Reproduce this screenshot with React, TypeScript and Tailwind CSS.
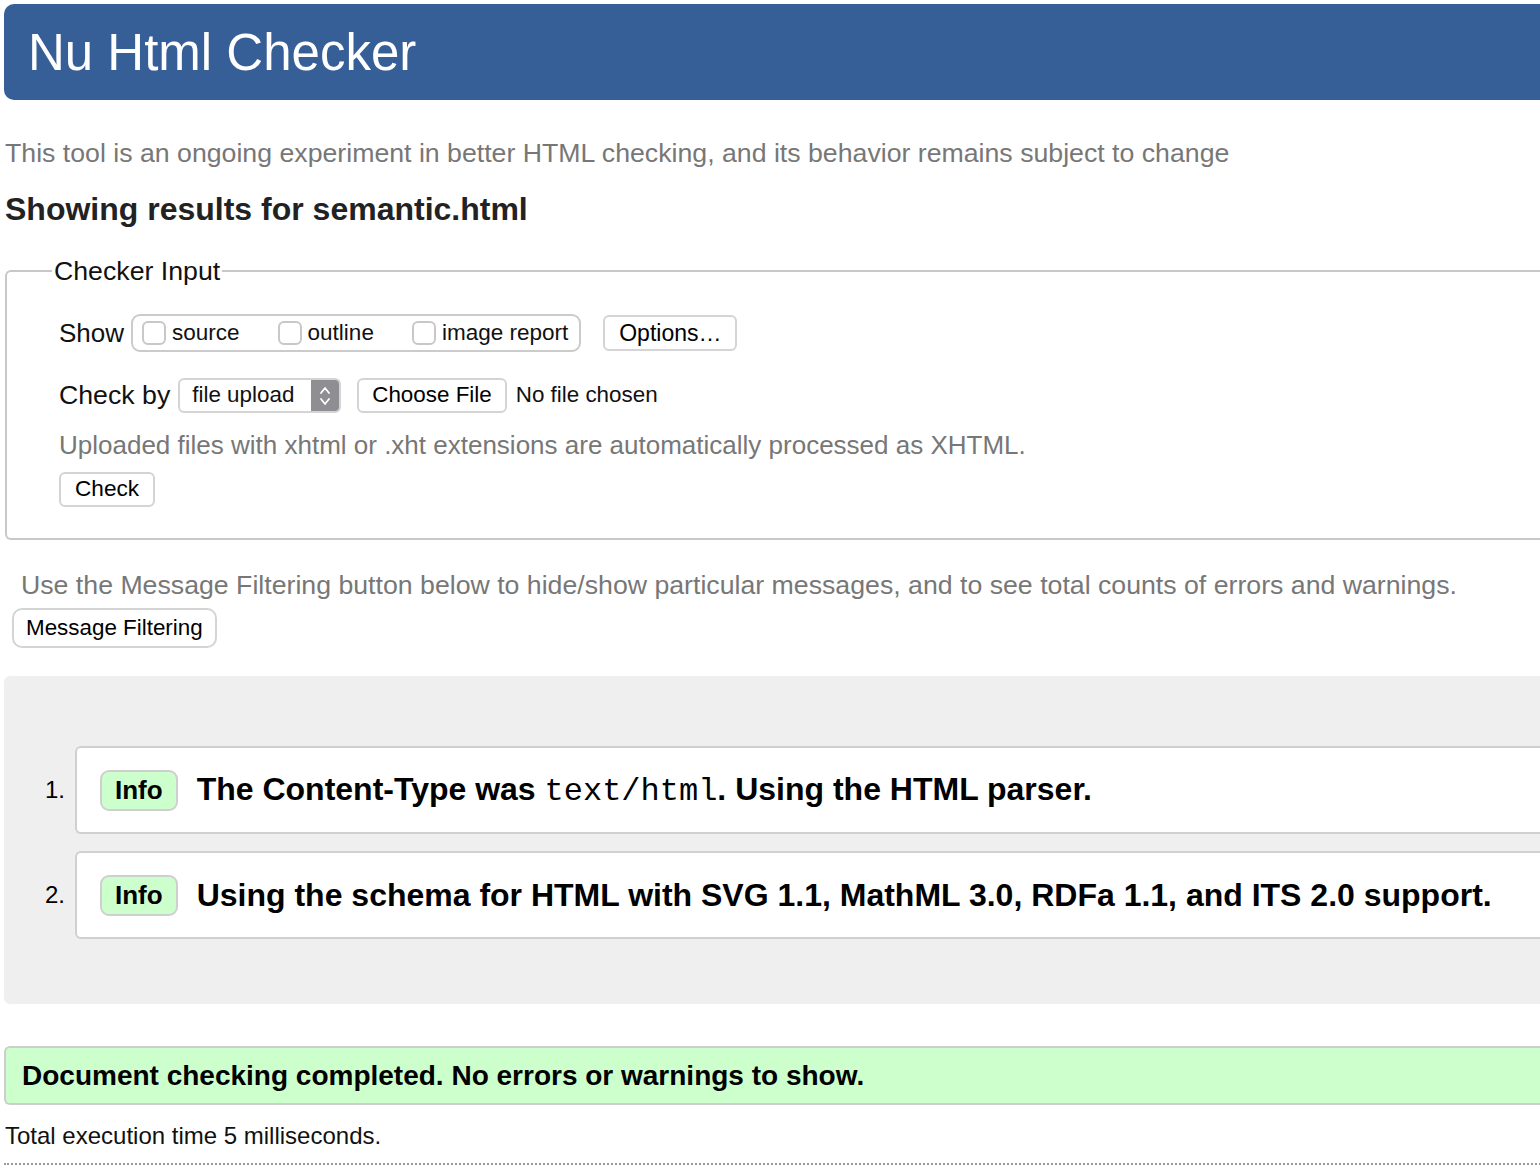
import React from "react";

const sans = "font-['Liberation_Sans',Arial,sans-serif]";

function Checkbox({ label }: { label: string }) {
  return (
    <label className="flex items-center gap-[6px]">
      <span className="w-[24px] h-[24px] rounded-[6px] border-2 border-[#c8c8c8] bg-white" />
      <span>{label}</span>
    </label>
  );
}

function Btn({ children, className = "" }: { children: React.ReactNode; className?: string }) {
  return (
    <button
      className={`bg-white border-2 border-[#d4d4d4] rounded-[6px] text-black leading-none ${className}`}
    >
      {children}
    </button>
  );
}

function Message({ n, children }: { n: number; children: React.ReactNode }) {
  return (
    <li className="flex items-center">
      <span className="w-[71px] pr-[10px] text-right text-[24px] text-black">{n}.</span>
      <div className="flex-1 h-[88px] bg-white border-2 border-r-0 border-[#d0d0d0] rounded-l-[6px] flex items-center pl-[23px] gap-[19px]">
        <span className="h-[41px] px-[13px] flex items-center bg-[#ccffcc] border-2 border-[#cfcfcf] rounded-[9px] font-bold text-[26px]">
          Info
        </span>
        <p className="font-bold text-[32px] text-black whitespace-nowrap">{children}</p>
      </div>
    </li>
  );
}

export default function App() {
  return (
    <div className={`w-full overflow-hidden bg-white ${sans}`}>
      <div className="w-[1600px] pl-[4px] pt-[4px] pb-[8px]">
        <header className="h-[96px] bg-[#365e97] rounded-l-[10px] flex items-center pl-[24px]">
          <h1 className="text-white text-[51px] leading-none">Nu Html Checker</h1>
        </header>

        <p className="mt-[38px] ml-[1px] text-[26.7px] leading-[30px] text-[#777]">
          This tool is an ongoing experiment in better HTML checking, and its behavior remains subject to change
        </p>
        <h2 className="mt-[23px] ml-[1px] text-[32px] leading-[36px] font-bold text-[#222]">
          Showing results for semantic.html
        </h2>

        <fieldset className="mt-[29px] ml-[1px] border-2 border-r-0 border-[#c8c8c8] rounded-l-[6px] pb-[31px]">
          <legend className="ml-[45px] px-[2px] text-[26.7px] leading-[30px] text-[#111]">Checker Input</legend>

          <div className="pl-[52px] pt-[28px]">
            <div className="h-[38px] flex items-center text-[22.5px] leading-none text-[#111]">
              <span className="text-[26px] mr-[7px]">Show</span>
              <div className="h-[38px] flex items-center gap-[38px] border-2 border-[#cbcbcb] rounded-[9px] pl-[9px] pr-[11px]">
                <Checkbox label="source" />
                <Checkbox label="outline" />
                <Checkbox label="image report" />
              </div>
              <Btn className="ml-[22px] h-[36px] px-[14px] text-[23px]">Options…</Btn>
            </div>

            <div className="mt-[26px] h-[35px] flex items-center text-[22.4px] leading-none text-[#111]">
              <span className="text-[26.7px] mr-[8px]">Check by</span>
              <div className="h-[35px] w-[163px] flex border-2 border-[#d4d4d4] rounded-[6px] overflow-hidden bg-white">
                <span className="flex-1 flex items-center pl-[12px]">file upload</span>
                <span className="w-[28px] bg-[#8e8e93] flex items-center justify-center">
                  <svg width="12" height="22" viewBox="0 0 12 22" fill="none" stroke="white" strokeWidth="1.8" strokeLinecap="round" strokeLinejoin="round">
                    <path d="M2 8 L6 3 L10 8" />
                    <path d="M2 14 L6 19 L10 14" />
                  </svg>
                </span>
              </div>
              <Btn className="ml-[16px] h-[35px] px-[13px] text-[22.4px]">Choose File</Btn>
              <span className="ml-[9px]">No file chosen</span>
            </div>

            <p className="mt-[17px] text-[26px] leading-[30px] text-[#777]">
              Uploaded files with xhtml or .xht extensions are automatically processed as XHTML.
            </p>

            <Btn className="mt-[12px] h-[35px] px-[14px] text-[22.6px]">Check</Btn>
          </div>
        </fieldset>

        <p className="mt-[30px] ml-[17px] text-[26.7px] leading-[30px] text-[#777]">
          Use the Message Filtering button below to hide/show particular messages, and to see total counts of errors and warnings.
        </p>
        <Btn className="mt-[8px] ml-[8px] h-[40px] px-[12px] text-[22.4px] rounded-[10px]">Message Filtering</Btn>

        <section className="mt-[28px] bg-[#efefef] rounded-l-[6px] pt-[70px] pb-[65px]">
          <ol className="flex flex-col gap-[17px]">
            <Message n={1}>
              The Content-Type was{" "}
              <code className="font-['Liberation_Mono',monospace] font-normal">text/html</code>. Using the HTML parser.
            </Message>
            <Message n={2}>
              Using the schema for HTML with SVG 1.1, MathML 3.0, RDFa 1.1, and ITS 2.0 support.
            </Message>
          </ol>
        </section>

        <div className="mt-[42px] h-[59px] bg-[#ccffcc] border-2 border-r-0 border-[#cdcdcd] rounded-l-[6px] flex items-center pl-[16px]">
          <p className="font-bold text-[28px] text-black">
            Document checking completed. No errors or warnings to show.
          </p>
        </div>

        <p className="mt-[17px] ml-[1px] text-[24px] leading-[28px] text-[#111]">Total execution time 5 milliseconds.</p>
        <div className="mt-[13px] border-t-2 border-dotted border-[#999]" />
      </div>
    </div>
  );
}
